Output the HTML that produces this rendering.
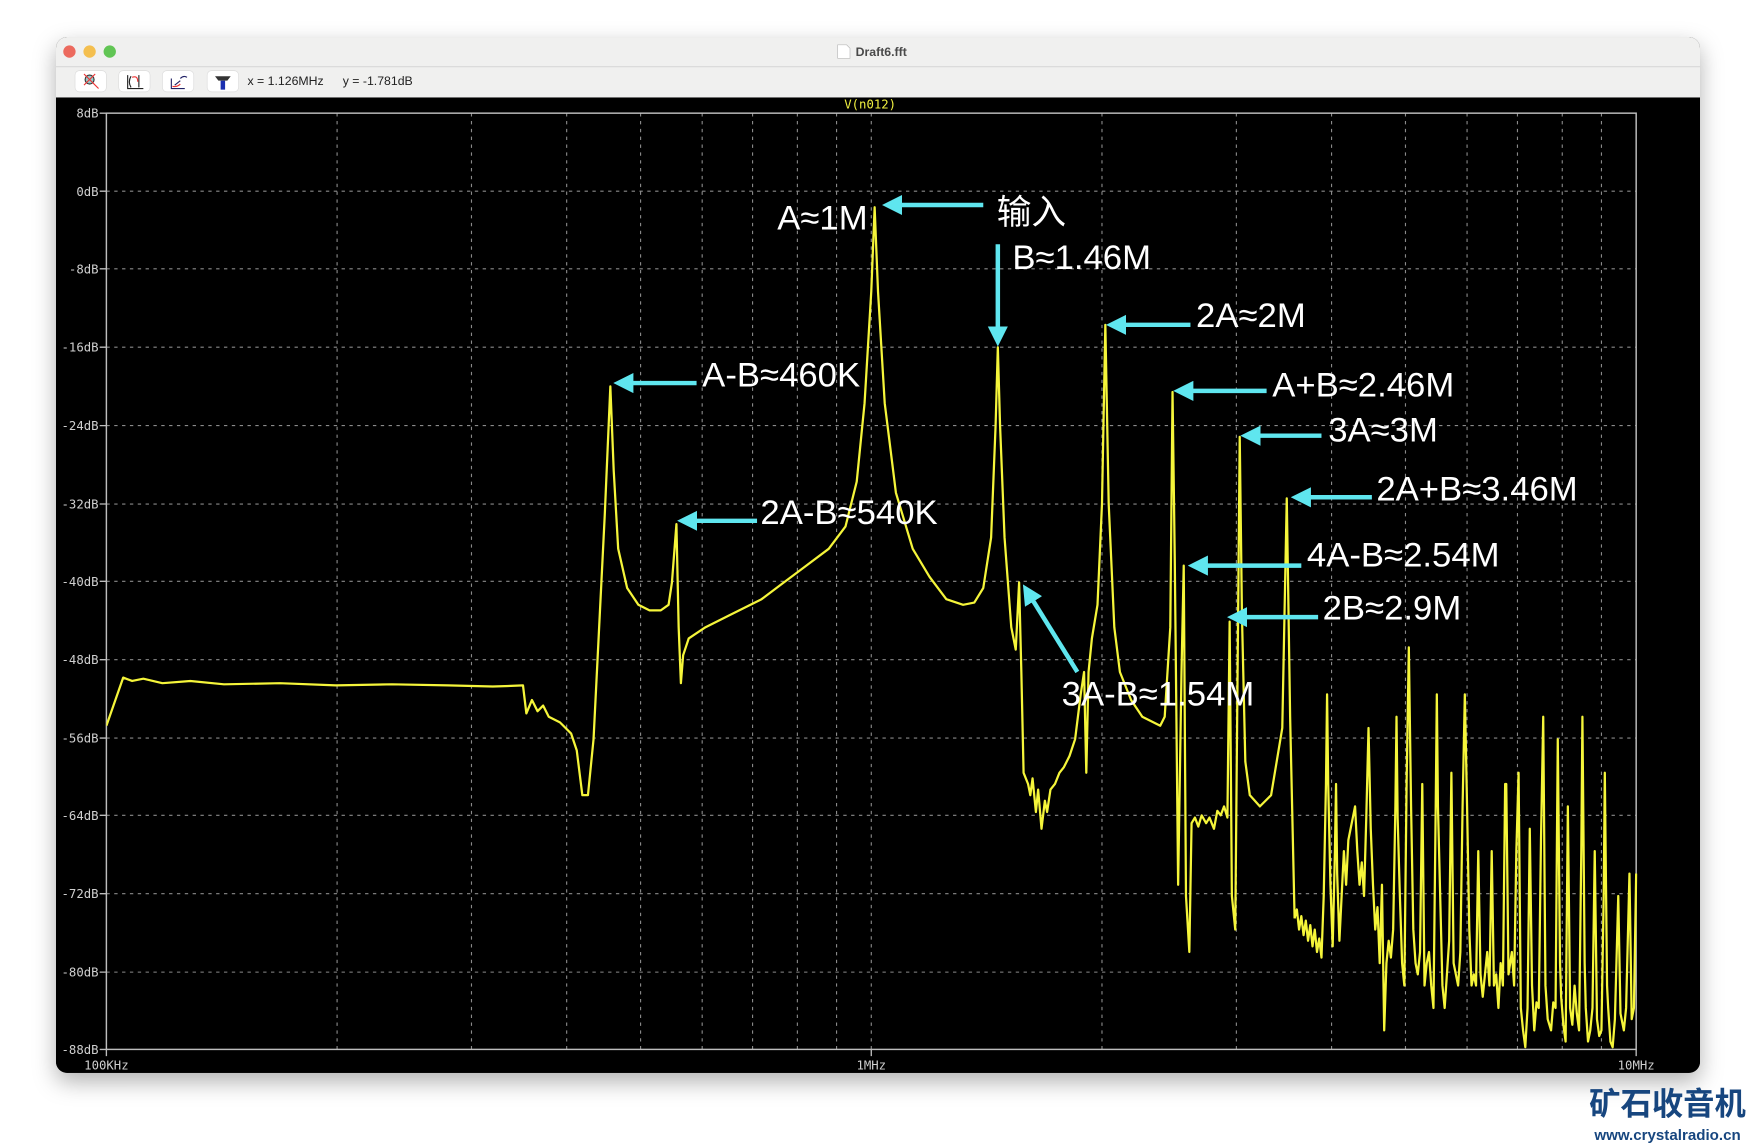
<!DOCTYPE html>
<html><head><meta charset="utf-8"><style>
html,body{margin:0;padding:0;background:#fff;width:1756px;height:1148px;overflow:hidden}
svg{display:block}
.ax{font-family:"DejaVu Sans Mono","Liberation Mono",monospace;font-size:11px;fill:#cfcfcf}
.an{font-family:"Liberation Sans","Noto Sans CJK SC",sans-serif;font-size:31px;fill:#fff}
</style></head><body>
<svg width="1756" height="1148" viewBox="0 0 1568 1025" xmlns="http://www.w3.org/2000/svg">
<defs>
<filter id="sh" x="-5%" y="-5%" width="110%" height="115%"><feDropShadow dx="0" dy="8" stdDeviation="10" flood-color="#000" flood-opacity="0.3"/></filter>
<clipPath id="win"><rect x="50" y="33" width="1468" height="925" rx="10"/></clipPath>
<clipPath id="plot"><rect x="95" y="101" width="1367" height="836"/></clipPath>
<marker id="ah" viewBox="0 0 10 10" refX="2" refY="5" markerWidth="4.5" markerHeight="4.5" orient="auto-start-reverse"><path d="M0,0 L10,5 L0,10 z" fill="#5fe6ef"/></marker>
</defs>
<rect x="50" y="33" width="1468" height="925" rx="10" fill="#000" filter="url(#sh)"/>
<g clip-path="url(#win)">
<rect x="50" y="33" width="1468" height="54" fill="#f0f0ef"/>
<line x1="50" y1="59.5" x2="1518" y2="59.5" stroke="#d8d8d8"/>
<rect x="50" y="87" width="1468" height="871" fill="#000"/>
</g>
<circle cx="62" cy="46" r="5.5" fill="#ec6a5e"/><circle cx="80" cy="46" r="5.5" fill="#f4bf4f"/><circle cx="98" cy="46" r="5.5" fill="#61c554"/>
<path d="M748 40h8l3 3v9h-11z" fill="#fff" stroke="#bbb" stroke-width="0.6"/>
<text x="764" y="50" font-family="Liberation Sans,sans-serif" font-size="11" font-weight="bold" fill="#4a4a4a">Draft6.fft</text>
<g fill="#fff" stroke="#dcdcdc" stroke-width="0.6">
<rect x="67" y="63" width="28" height="19" rx="4"/><rect x="106" y="63" width="28" height="19" rx="4"/><rect x="145" y="63" width="28" height="19" rx="4"/><rect x="185" y="63" width="28" height="19" rx="4"/></g>
<circle cx="80" cy="71" r="4" fill="#9cc" stroke="#333" stroke-width="1"/><path d="M83 74l5 5M75 66l10 10M85 66l-10 10" stroke="#e33" stroke-width="1"/>
<path d="M114 67v12h14M117 68q-3 5 0 10M124 67v11" stroke="#222" stroke-width="1" fill="none"/><path d="M118 69q5-2 5 4" stroke="#e33" fill="none"/>
<path d="M153 70v9h12M156 76l5-4M161 70q3-3 6-1" stroke="#226" stroke-width="1" fill="none"/><path d="M154 77q4 1 7-2" stroke="#e33" fill="none"/>
<path d="M192 68h14l-3 4h-8z" fill="#333"/><rect x="197" y="72" width="4" height="8" fill="#1a2fb0"/>
<text x="221" y="76" font-family="Liberation Sans,sans-serif" font-size="11" fill="#222">x = 1.126MHz</text>
<text x="306" y="76" font-family="Liberation Sans,sans-serif" font-size="11" fill="#222">y = -1.781dB</text>

<text x="777" y="97" text-anchor="middle" class="ax" style="fill:#f0f040">V(n012)</text>
<g stroke="#8a8a8a" stroke-width="1" stroke-dasharray="3,4">
<path d="M95 170.7H1461M95 240H1461M95 310H1461M95 380H1461M95 450H1461M95 519H1461M95 589H1461M95 659H1461M95 728H1461M95 798H1461M95 868H1461"/>
<path d="M301 101V937M421 101V937M506 101V937M572 101V937M627 101V937M672 101V937M712 101V937M747 101V937M778 101V937M984 101V937M1104 101V937M1189 101V937M1255 101V937M1310 101V937M1355 101V937M1395 101V937M1430 101V937"/>
</g>
<rect x="95" y="101" width="1366" height="836" fill="none" stroke="#bdbdbd" stroke-width="1.3"/>
<g stroke="#bdbdbd" stroke-width="1.2"><path d="M89 101h6M89 170.7h6M89 240h6M89 310h6M89 380h6M89 450h6M89 519h6M89 589h6M89 659h6M89 728h6M89 798h6M89 868h6M89 937h6M95 937v6M778 937v6M1461 937v6"/></g>
<g class="ax" text-anchor="end">
<text x="88" y="105">8dB</text><text x="88" y="175">0dB</text><text x="88" y="244">-8dB</text><text x="88" y="314">-16dB</text><text x="88" y="384">-24dB</text><text x="88" y="454">-32dB</text><text x="88" y="523">-40dB</text><text x="88" y="593">-48dB</text><text x="88" y="663">-56dB</text><text x="88" y="732">-64dB</text><text x="88" y="802">-72dB</text><text x="88" y="872">-80dB</text><text x="88" y="941">-88dB</text></g>
<g class="ax" text-anchor="middle"><text x="95" y="955">100KHz</text><text x="778" y="955">1MHz</text><text x="1461" y="955">10MHz</text></g>

<g clip-path="url(#plot)" fill="none" stroke="#f5f53a" stroke-width="2" stroke-linejoin="round">
<polyline points="95,648 110,605 118,608 128,606 145,610 170,608 200,611 250,610 300,612 350,611 400,612 440,613 467,612 470,637 475,625 480,635 485,630 490,640 500,645 510,655 515,670 520,710 525,710 530,660 535,560 540,460 545,345 548,420 552,490 560,525 570,540 580,545 590,545 597,540 600,520 604,468 606,560 608,610 610,585 615,570 630,560 650,550 680,535 700,520 720,505 740,490 755,470 765,430 772,360 778,260 781,185 784,260 790,360 800,440 815,490 830,515 845,535 860,540 870,538 878,525 885,480 889,380 891,310 893,380 897,480 903,560 907,580 910,520 912,600 914,690 918,700 920,710 922,695 925,725 927,705 930,740 933,715 935,725 938,705 942,700 946,690 950,685 955,675 960,660 965,620 968,600 970,690 972,600 975,570 980,540 984,450 987,290 990,450 995,560 1000,600 1010,625 1020,640 1030,645 1036,648 1040,640 1045,560 1047,350 1049,500 1052,790 1055,600 1057,505 1059,800 1062,850 1064,735 1067,730 1070,738 1073,728 1077,735 1080,730 1084,740 1087,724 1090,728 1093,720 1096,730 1098,555 1100,800 1103,830 1106,500 1107,390 1109,550 1112,680 1116,710 1125,720 1135,710 1145,650 1149,445 1152,640 1156,820"/>
<polyline points="1156,820 1158,812 1160,830 1162,818 1164,835 1166,822 1168,840 1170,826 1172,845 1174,830 1176,850 1178,838 1180,855 1182,800 1184,700 1185,620 1186,700 1188,790 1190,845 1192,760 1193,700 1194,780 1196,840 1198,800 1200,760 1202,790 1204,750 1206,740 1208,730 1210,720 1212,760 1214,790 1216,770 1218,800 1220,730 1222,650 1224,740 1226,790 1228,830 1230,810 1232,860 1234,790 1236,920 1238,860 1240,840 1242,855 1244,830 1246,720 1247,640 1248,730 1250,800 1252,860 1254,880 1256,700 1258,578 1260,720 1262,830 1264,860 1266,870 1268,850 1270,700 1272,880 1274,860 1276,850 1278,880 1280,900 1282,720 1283,620 1284,720 1286,800 1288,880 1290,900 1292,870 1294,840 1296,690 1298,860 1300,870 1302,880 1304,850 1306,720 1308,620 1310,720 1312,830 1314,880 1316,870 1318,880 1320,760 1322,870 1324,890 1326,870 1328,850 1330,880 1332,760 1334,880 1336,870 1338,900 1340,860 1342,880 1344,700 1345,700 1347,870 1350,850 1352,880 1354,760 1356,690 1358,900 1360,920 1362,935 1364,900 1366,740 1368,880 1370,920 1372,895 1374,900 1376,750 1378,640 1380,880 1382,910 1385,920 1387,895 1389,900 1391,660 1393,860 1394,890 1396,915 1398,930 1400,720 1402,900 1404,915 1406,880 1408,905 1410,920 1412,760 1413,640 1415,860 1416,900 1418,930 1420,920 1422,900 1424,760 1426,910 1428,925 1430,920 1432,800 1433,690 1435,880 1436,900 1438,930 1440,935 1442,910 1445,800 1447,905 1450,920 1452,900 1455,780 1457,910 1459,900 1461,780"/>
</g>

<g stroke="#5fe6ef" stroke-width="4" marker-end="url(#ah)">
<line x1="878" y1="183" x2="802" y2="183"/>
<line x1="891" y1="218" x2="891" y2="295"/>
<line x1="1063" y1="290" x2="1002" y2="290"/>
<line x1="622" y1="342" x2="562" y2="342"/>
<line x1="1131" y1="349" x2="1062" y2="349"/>
<line x1="1180" y1="389" x2="1122" y2="389"/>
<line x1="1225" y1="444" x2="1167" y2="444"/>
<line x1="676" y1="465" x2="619" y2="465"/>
<line x1="1162" y1="505" x2="1075" y2="505"/>
<line x1="1177" y1="551" x2="1110" y2="551"/>
<line x1="962" y1="600" x2="921" y2="534"/>
</g>
<g class="an">
<text x="694" y="205">A≈1M</text>
<text x="890" y="200">输入</text>
<text x="904" y="240">B≈1.46M</text>
<text x="1068" y="292">2A≈2M</text>
<text x="627" y="345">A-B≈460K</text>
<text x="1136" y="354">A+B≈2.46M</text>
<text x="1186" y="394">3A≈3M</text>
<text x="1229" y="447">2A+B≈3.46M</text>
<text x="679" y="468">2A-B≈540K</text>
<text x="1167" y="506">4A-B≈2.54M</text>
<text x="1181" y="553">2B≈2.9M</text>
<text x="948" y="630">3A-B≈1.54M</text>
</g>
<text x="1489" y="995" text-anchor="middle" font-family="WenQuanYi Zen Hei,Noto Sans CJK SC,sans-serif" font-size="28" font-weight="bold" fill="#17467f">矿石收音机</text>
<text x="1489" y="1018" text-anchor="middle" font-family="Liberation Sans,sans-serif" font-size="13.5" font-weight="bold" fill="#17467f">www.crystalradio.cn</text>
</svg>
</body></html>
